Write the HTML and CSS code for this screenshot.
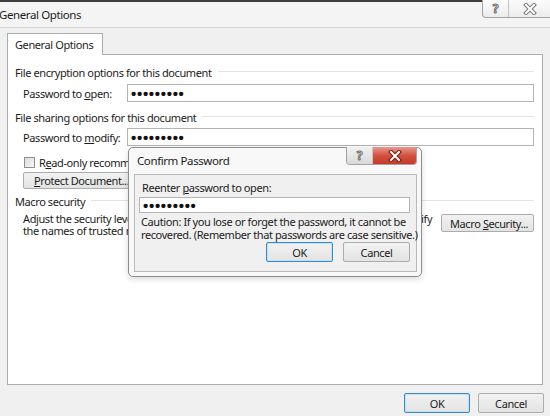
FILE: index.html
```html
<!DOCTYPE html>
<html lang="en">

<head>
    <meta charset="UTF-8">
    <meta name="viewport" content="width=device-width, initial-scale=1.0">
    <title>General Options</title>
    <link rel="stylesheet" href="styles.css">
</head>

<body>
    <div class="window">
        <div class="titlebar">
            <span class="title">General Options</span>
            <div class="caption-btns">
                <span class="cap help">?</span>
                <span class="cap close">
                    <svg width="14" height="12" viewBox="0 0 14 12">
                        <path d="M3 2 L11 10 M11 2 L3 10" stroke="#7a7a7a" stroke-width="4" stroke-linecap="square" />
                        <path d="M3 2 L11 10 M11 2 L3 10" stroke="#fff" stroke-width="2" stroke-linecap="square" />
                    </svg>
                </span>
            </div>
        </div>

        <div class="tabs">
            <div class="tab">General Options</div>
        </div>

        <div class="panel">
            <div class="group-head">File encryption options for this document</div>
            <div class="field-row">
                <label>Password to <u>o</u>pen:</label>
                <div class="textbox"><span class="dots">•••••••••</span></div>
            </div>

            <div class="group-head second">File sharing options for this document</div>
            <div class="field-row tight">
                <label>Password to <u>m</u>odify:</label>
                <div class="textbox"><span class="dots">•••••••••</span></div>
            </div>

            <div class="check-row">
                <span class="checkbox"></span>
                <span>R<u>e</u>ad-only recommended</span>
            </div>
            <button class="btn protect"><u>P</u>rotect Document...</button>

            <div class="group-head macro">Macro security</div>
            <div class="macro-row">
                <p>Adjust the security level for opening files that might contain macro viruses and specify<br>
                    the names of trusted macro developers.</p>
                <button class="btn macro-btn">Macro <u>S</u>ecurity...</button>
            </div>
        </div>

        <div class="footer">
            <button class="btn default">OK</button>
            <button class="btn">Cancel</button>
        </div>

        <!-- dialog on top of the options window -->
        <div class="confirm">
            <div class="confirm-title">Confirm Password</div>
            <div class="caption-btns active">
                <span class="cap help">?</span>
                <span class="cap close">
                    <svg width="14" height="12" viewBox="0 0 14 12">
                        <path d="M3 2 L11 10 M11 2 L3 10" stroke="#6b1d12" stroke-width="4" stroke-linecap="square" />
                        <path d="M3 2 L11 10 M11 2 L3 10" stroke="#fff" stroke-width="2" stroke-linecap="square" />
                    </svg>
                </span>
            </div>
            <div class="confirm-client">
                <div class="confirm-label">Reenter <u>p</u>assword to open:</div>
                <div class="textbox wide"><span class="dots">•••••••••</span></div>
                <p class="caution">Caution: If you lose or forget the password, it cannot be<br>
                    recovered. (Remember that passwords are case sensitive.)</p>
                <div class="confirm-buttons">
                    <button class="btn default">OK</button>
                    <button class="btn">Cancel</button>
                </div>
            </div>
        </div>
    </div>
</body>

</html>
```

FILE: styles.css
```css
body {
    margin: 0;
    font-family: 'Noto Sans', 'Open Sans', sans-serif;
    font-size: 11px;
    letter-spacing: -0.4px;
    color: #1c1c1c;
    background-color: #f0f0f0;
    overflow: hidden;
    white-space: nowrap;
}

.window {
    position: relative;
    width: 550px;
    height: 416px;
    display: flex;
    flex-direction: column;
    background-color: #f0f0f0;
}

.titlebar {
    display: flex;
    height: 25px;
    border-top: 2px solid #3d3d3d;
    border-bottom: 1px solid #d3d3d3;
    background-color: #f4f4f4;
}

.title {
    margin-left: -1px;
    line-height: 25px;
    font-size: 11.5px;
}

.caption-btns {
    display: flex;
    margin-left: auto;
    margin-top: -2px;
    height: 17px;
    border: 1px solid #a3a3a3;
    border-top: none;
    border-bottom-left-radius: 4px;
    border-bottom-right-radius: 4px;
    overflow: hidden;
    background: linear-gradient(#fbfbfb, #ececec);
}

.titlebar .caption-btns {
    border-right: none;
    border-bottom-right-radius: 0;
}

.cap {
    display: flex;
    align-items: center;
    justify-content: center;
    height: 17px;
}

.cap.help {
    width: 25px;
    border-right: 1px solid #c4c4c4;
    color: #fff;
    font-weight: bold;
    font-size: 12px;
    letter-spacing: 0;
    -webkit-text-stroke: 1px #707070;
}

.cap.close {
    width: 41px;
}

.tabs {
    display: flex;
    align-items: flex-end;
    height: 26px;
    padding-left: 7px;
}

.tab {
    position: relative;
    z-index: 1;
    width: 96px;
    height: 22px;
    box-sizing: border-box;
    margin-bottom: -1px;
    padding-left: 7px;
    line-height: 21px;
    border: 1px solid #acacac;
    border-bottom: none;
    background-color: #fff;
}

.panel {
    height: 329px;
    margin: 0 7px;
    padding: 0 8px 0 7px;
    border: 1px solid #acacac;
    background-color: #fff;
}

.group-head {
    display: flex;
    align-items: center;
    gap: 6px;
    height: 16px;
    margin-top: 9px;
}

.group-head::after {
    content: '';
    flex: 1;
    height: 1px;
    margin-top: -2px;
    background-color: #e2e2e2;
}

.group-head.second {
    margin-top: 7px;
}

.group-head.macro {
    margin-top: 4px;
}

.field-row {
    display: flex;
    align-items: center;
    margin-top: 4px;
    padding-left: 8px;
}

.field-row.tight {
    margin-top: 3px;
}

.field-row label {
    width: 104px;
}

.textbox {
    flex: 1;
    height: 18px;
    box-sizing: border-box;
    display: flex;
    align-items: center;
    padding-left: 3px;
    border: 1px solid #b4b4b4;
    background-color: #fff;
}

.dots {
    font-family: 'Liberation Sans', sans-serif;
    font-size: 15px;
    font-weight: bold;
    letter-spacing: 0.7px;
    line-height: 1;
    color: #111;
}

.check-row {
    display: flex;
    align-items: center;
    gap: 4px;
    height: 16px;
    margin-top: 8px;
    padding-left: 9px;
}

.checkbox {
    width: 9px;
    height: 9px;
    border: 1px solid #8f8f8f;
    background: linear-gradient(135deg, #dcdcdc, #f6f6f6);
}

.btn {
    height: 20px;
    padding: 0 8px;
    font-family: inherit;
    font-size: 11px;
    letter-spacing: -0.4px;
    white-space: nowrap;
    color: #1c1c1c;
    border: 1px solid #acacac;
    border-radius: 2px;
    background: linear-gradient(#f2f2f2, #e3e3e3);
}

.btn.default {
    border-color: #3c8ac4;
    box-shadow: inset 0 0 0 1px #bfe0f5;
}

.btn.protect {
    display: block;
    width: 112px;
    height: 17px;
    margin: 2px 0 0 8px;
    text-align: left;
    padding-left: 10px;
}

.macro-row {
    display: flex;
    align-items: flex-start;
    padding-left: 8px;
}

.macro-row p {
    width: 410px;
    margin: 4px 0 0;
    line-height: 12px;
}

.btn.macro-btn {
    width: 93px;
    height: 18px;
    margin: 5px 0 0 auto;
}

.footer {
    display: flex;
    justify-content: flex-end;
    gap: 8px;
    padding: 8px 6px 0 0;
}

.footer .btn {
    width: 66px;
}

.confirm {
    position: absolute;
    left: 128px;
    top: 147px;
    width: 294px;
    height: 130px;
    box-sizing: border-box;
    border: 1px solid #8c8c8c;
    border-radius: 5px;
    background-color: #f8f8f8;
    box-shadow: 0 2px 6px rgba(0, 0, 0, 0.15);
}

.confirm-title {
    height: 26px;
    padding-left: 8px;
    line-height: 25px;
    font-size: 11.5px;
}

.confirm .caption-btns {
    position: absolute;
    top: -1px;
    right: 4px;
    margin: 0;
}

.caption-btns.active .cap.close {
    width: 43px;
    background: linear-gradient(#e8998f, #d2523f 50%, #c53a26);
}

.caption-btns.active .cap.help {
    background: linear-gradient(#f2f2f2, #d9d9d9);
}

.confirm-client {
    width: 283px;
    height: 98px;
    box-sizing: border-box;
    margin-left: 5px;
    border: 1px solid #b9b9b9;
    background-color: #f0f0f0;
}

.confirm-label {
    padding: 6px 0 0 7px;
    line-height: 13px;
}

.textbox.wide {
    flex: none;
    width: 271px;
    height: 16px;
    margin: 3px 0 0 4px;
}

.caution {
    margin: 2px 0 0 6px;
    line-height: 13px;
}

.confirm-buttons {
    display: flex;
    justify-content: flex-end;
    gap: 10px;
    margin-top: 1px;
    padding-right: 6px;
}

.confirm-buttons .btn {
    width: 67px;
}
```
